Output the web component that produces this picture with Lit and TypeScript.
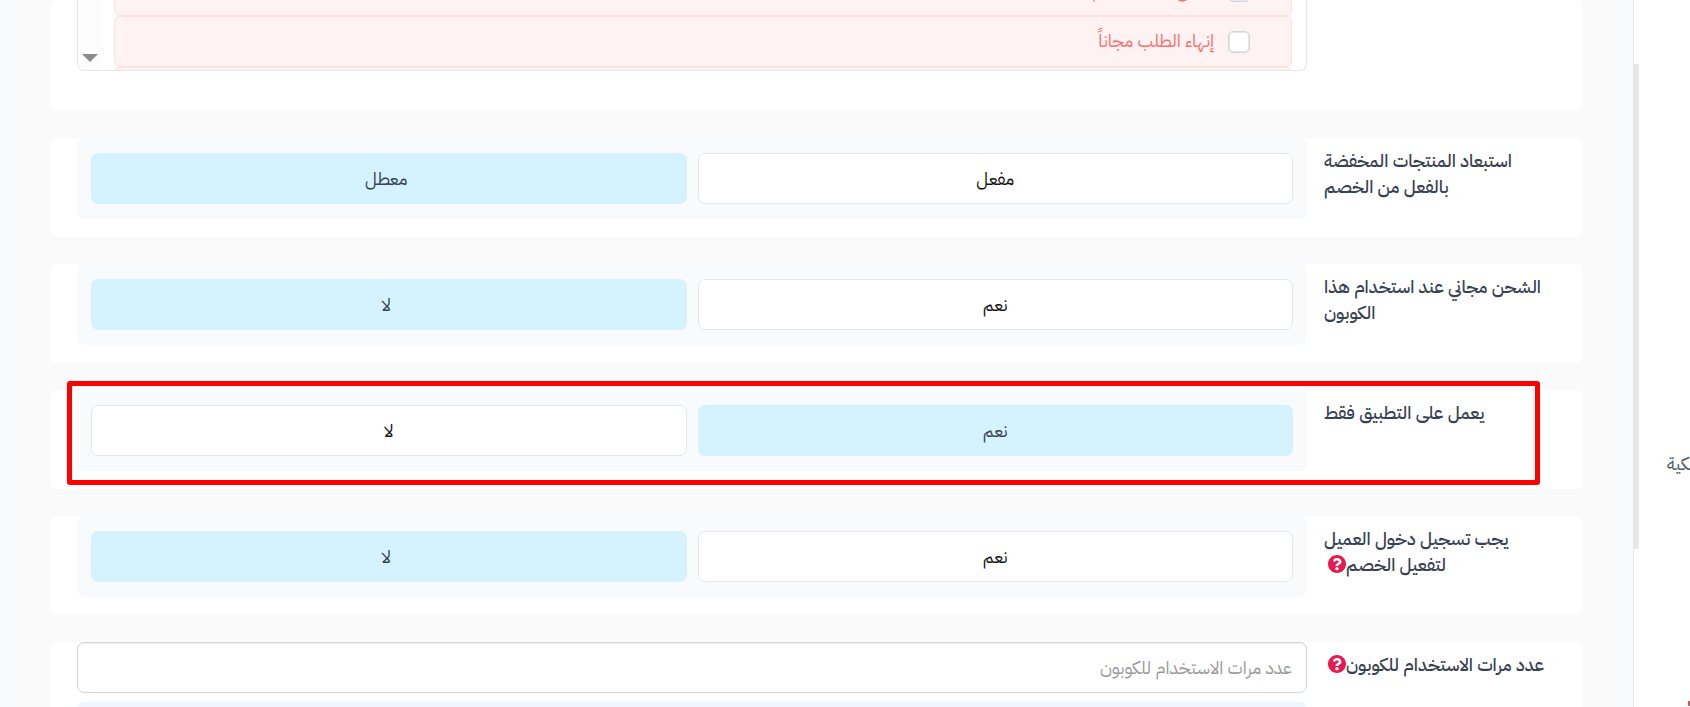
import { LitElement, html, css, nothing } from "lit";
import { customElement, property } from "lit/decorators.js";

@customElement("help-icon")
class HelpIcon extends LitElement {
  static styles = css`
    :host { display: inline-block; vertical-align: middle; width: 18px; height: 18px; margin-bottom: 4px; }
    svg { display: block; width: 18px; height: 18px; fill: #e8194f; }
  `;
  render() {
    return html`<svg viewBox="8 8 496 496" aria-hidden="true"><path d="M504 256c0 136.997-111.043 248-248 248S8 392.997 8 256C8 119.083 119.043 8 256 8s248 111.083 248 248zM262.655 90c-54.497 0-89.255 22.957-116.549 63.758-3.536 5.286-2.353 12.415 2.715 16.258l34.699 26.31c5.205 3.947 12.621 3.008 16.665-2.122 17.864-22.658 30.113-35.797 57.303-35.797 20.429 0 45.698 13.148 45.698 32.958 0 14.976-12.363 22.667-32.534 33.976C247.128 238.528 216 254.941 216 296v4c0 6.627 5.373 12 12 12h56c6.627 0 12-5.373 12-12v-1.333c0-28.462 83.186-29.647 83.186-106.667 0-58.002-60.165-102-116.531-102zM256 338c-25.365 0-46 20.635-46 46 0 25.364 20.635 46 46 46s46-20.636 46-46c0-25.364-20.635-46-46-46z"/></svg>`;
  }
}

@customElement("choice-row")
class ChoiceRow extends LitElement {
  static properties = { options: { attribute: false } };
  @property() name = "";
  @property() caption = "";
  @property() selected = "";
  @property({ type: Boolean }) help = false;
  @property({ type: Boolean }) highlighted = false;
  options: string[] = [];

  static styles = css`
    :host { display: block; }
    .card {
      position: relative; margin: 0; border: 0; min-width: 0;
      background: #fff; border-radius: 7px; padding: 0 27px 18px;
      display: grid; grid-template-columns: 249px 1fr;
    }
    .caption { padding: 10px 0 0 17px; text-align: left; font-weight: 500; line-height: 26px; color: #374151; }
    .help { margin-left: 4px; }
    .group {
      background: #f8fafc; border-radius: 7px; padding: 15px 14px;
      display: grid; grid-template-columns: 1fr 1fr; gap: 11px; align-self: start;
    }
    .option {
      position: relative; display: flex; align-items: center; justify-content: center;
      height: 49px; border: 1px solid #e5e7eb; border-radius: 7px;
      background: #fff; color: #111; cursor: pointer;
    }
    .option.on { background: #d5f3ff; border-color: #d5f3ff; color: #374151; }
    .option.on:last-child { padding-right: 5px; }
    .radio { position: absolute; inset: 0; margin: 0; opacity: 0; width: 100%; height: 100%; cursor: pointer; }
    .marker {
      position: absolute; top: -9px; bottom: 4px; left: 17px; right: 43px;
      border: 5px solid #f00; border-radius: 3px; pointer-events: none;
    }
  `;
  render() {
    return html`<div class="card" role="radiogroup" aria-labelledby="caption">
      <div class="caption" id="caption">${this.caption}${this.help ? html`<help-icon class="help"></help-icon>` : nothing}</div>
      <div class="group">
        ${this.options.map(
          (o) => html`<label class="option ${o === this.selected ? "on" : ""}">
            <input class="radio" type="radio" name=${this.name} .checked=${o === this.selected}
              @change=${() => (this.selected = o)} />${o}</label>`
        )}
      </div>
      ${this.highlighted ? html`<div class="marker"></div>` : nothing}
    </div>`;
  }
}

@customElement("app-root")
class AppRoot extends LitElement {
  static styles = css`
    :host {
      display: block; height: 100vh; overflow: hidden; direction: rtl; background: #fff;
      font-family: "IBM Plex Sans Arabic", "Noto Sans", "DejaVu Sans", sans-serif;
      font-size: 18px; line-height: 26px;
    }
    .page { display: flex; height: 100%; }
    .side {
      position: relative; flex: 0 0 56px; overflow: hidden; border-left: 1px solid #e5e7eb;
      direction: ltr; color: #4b5563;
    }
    .link { display: block; margin: 451px 0 0 33px; white-space: nowrap; color: inherit; text-decoration: none; }
    .alert { display: block; width: 8px; height: 5px; margin: 224px 0 0 54px; border-radius: 1px; background: #ef4444; }
    .thumb { position: absolute; top: 64px; left: 0; width: 5px; height: 485px; border-radius: 0 0 3px 0; background: #e5e7eb; }
    .main { flex: 1; min-width: 0; overflow: hidden; background: #f8fafc; padding: 0 23px; }
    .stack { background: #fafafa; padding: 0 27px; display: flex; flex-direction: column; gap: 27px; min-height: 100%; }
    .card { background: #fff; border-radius: 7px; padding: 0 27px 40px; display: grid; grid-template-columns: 249px 1fr; }
    .list {
      grid-column: 2; height: 70px; overflow: hidden; border: 1px solid #e5e7eb; border-top: 0;
      border-radius: 0 0 7px 7px; display: flex;
    }
    .items { flex: 1; padding: 0 14px 0 13px; margin-top: -35px; }
    .item {
      box-sizing: border-box; display: flex; align-items: center; gap: 14px; height: 51px; padding: 0 41px 2px 0;
      border: 1px solid #fee2e2; border-radius: 5px; background: #fef2f2; color: #f87171;
    }
    .check {
      appearance: none; margin: 3px 0 0; width: 22px; height: 22px; box-sizing: border-box;
      border: 1px solid #d1d5db; border-radius: 5px; background: #fff;
      box-shadow: inset 0 0 0 1px #e5e7eb;
    }
    .track { width: 23px; background: #fcfcfc; display: flex; align-items: flex-end; justify-content: center; }
    .arrow { width: 16px; height: 8px; margin-bottom: 8px; fill: #8b8b8b; }
    .last { padding-bottom: 18px; }
    .caption { padding: 10px 0 0 17px; text-align: left; font-weight: 500; color: #374151; }
    .help { margin-left: 4px; }
    .field { display: flex; flex-direction: column; gap: 9px; }
    .input {
      box-sizing: border-box; width: 100%; height: 51px; padding: 0 14px; font: inherit; color: #111;
      border: 1px solid #d1d5db; border-radius: 7px; background: #fff;
      box-shadow: inset 0 1px 1px rgba(0, 0, 0, 0.06);
    }
    .input::placeholder { color: #999; opacity: 1; }
    .note { height: 60px; border-radius: 7px; background: #eff6ff; }
  `;
  render() {
    const methods = ["الدفع عند الاستلام", "إنهاء الطلب مجاناً", ""];
    return html`<div class="page">
      <aside class="side">
        <a class="link" href="#">الملكية</a>
        <span class="alert"></span>
        <div class="thumb"></div>
      </aside>
      <main class="main">
        <div class="stack">
          <section class="card">
            <div class="list">
              <div class="items">
                ${methods.map((m) => html`<label class="item"><input class="check" type="checkbox" />${m}</label>`)}
              </div>
              <div class="track"><svg class="arrow" viewBox="0 0 16 8"><path d="M0 0h16L8 8z"/></svg></div>
            </div>
          </section>
          <choice-row name="discounted" caption="استبعاد المنتجات المخفضة بالفعل من الخصم" .options=${["مفعل", "معطل"]} selected="معطل"></choice-row>
          <choice-row name="shipping" caption="الشحن مجاني عند استخدام هذا الكوبون" .options=${["نعم", "لا"]} selected="لا"></choice-row>
          <choice-row name="apponly" caption="يعمل على التطبيق فقط" .options=${["نعم", "لا"]} selected="نعم" highlighted></choice-row>
          <choice-row name="login" caption="يجب تسجيل دخول العميل لتفعيل الخصم" .options=${["نعم", "لا"]} selected="لا" help></choice-row>
          <section class="card last">
            <label class="caption" for="uses">عدد مرات الاستخدام للكوبون<help-icon class="help"></help-icon></label>
            <div class="field">
              <input class="input" id="uses" type="text" placeholder="عدد مرات الاستخدام للكوبون" />
              <div class="note"></div>
            </div>
          </section>
        </div>
      </main>
    </div>`;
  }
}
